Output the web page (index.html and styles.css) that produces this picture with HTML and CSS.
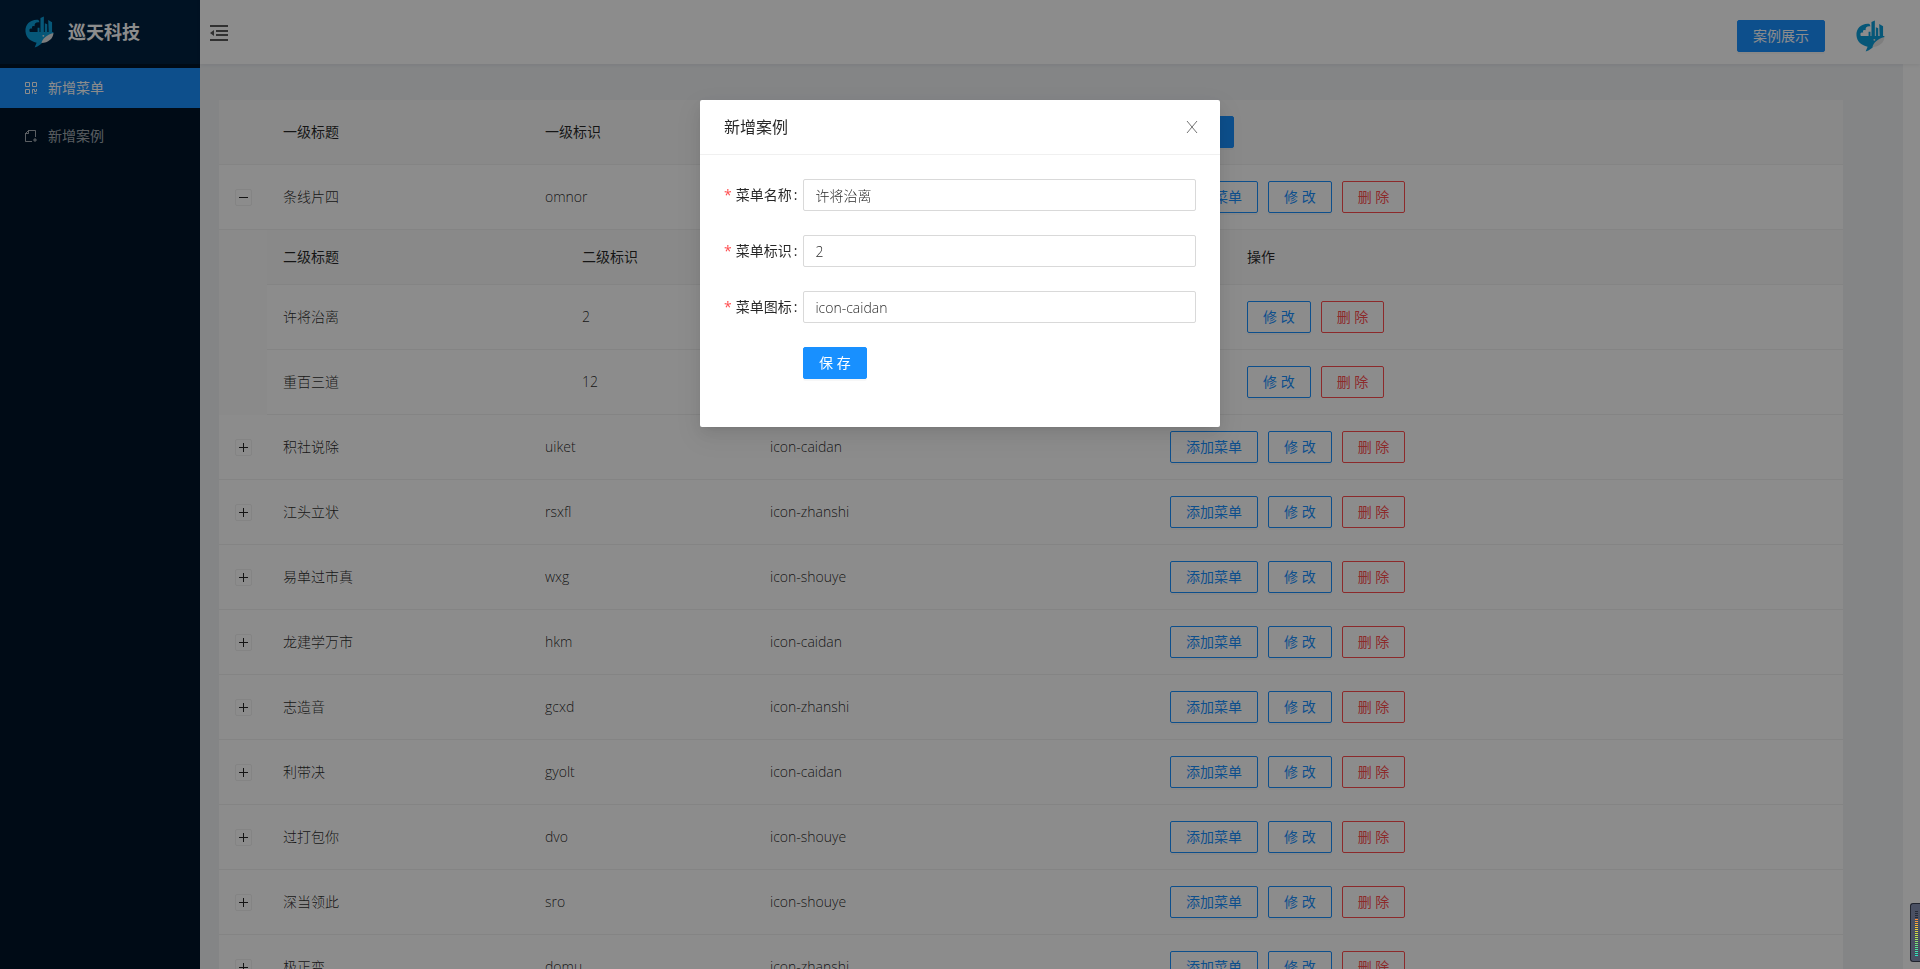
FILE: index.html
```html
<!DOCTYPE html>
<html lang="zh-CN">
<head>
<meta charset="utf-8">
<title>新增菜单</title>
<link rel="stylesheet" href="styles.css">
</head>
<body>
<svg class="defs" aria-hidden="true">
  <symbol id="logo" viewBox="0 0 30 32">
    <path class="whale" d="M14 3.500C6 2.500 0 8 .5 15.500C1 21.500 5 25.500 12 27L10 32C14 30.500 17 28.500 18 26.500C23 26 28 22 29.500 16H5C4 13 5 12.500 7.500 12.500C6.500 10 8 9.500 10 10C9.500 7 11.500 5.500 15 6Z"/>
    <path class="whale" d="M13 11.500H15V16.500H13ZM16 1.500L19.500 0V16.500H16ZM20.500 7L23 8V16.500H20.500ZM24 3.500L28 6V16.500H24.500Z"/>
    <path class="belly" d="M29.500 17C29 23 24 27 17 27.500C18 23 22 19 29.500 17Z"/>
    <circle class="belly" cx="19" cy="20" r="1"/>
  </symbol>
</svg>
<div class="app">
  <aside class="sider">
    <div class="brand"><svg class="logo"><use href="#logo"/></svg><h1>巡天科技</h1></div>
    <nav class="menu">
      <a class="menu-item active" href="#"><svg viewBox="0 0 12 12"><path d="M.5.500h4v4h-4zM7.500.500h4v4h-4zM.5 7.500h4v4h-4zM11.500 7v2M7.500 11.500v-4h2v2h2M9.500 11.500h2"/></svg>新增菜单</a>
      <a class="menu-item" href="#"><svg viewBox="0 0 12 12"><path d="M7 11.500H.5V3.500L3.500.500H10.500V7M3.500.500V3.500H.5M10 8v4M8 10h4"/></svg>新增案例</a>
    </nav>
  </aside>
  <div class="main">
    <header class="header">
      <button class="fold" aria-label="收起菜单"><svg viewBox="0 0 18 16"><path d="M0 0h18v2H0zM6 5h12v2H6zM6 9h12v2H6zM0 14h18v2H0zM0 8L4 5v6z"/></svg></button>
      <div class="header-right"><button class="btn primary">案例展示</button><svg class="logo"><use href="#logo"/></svg></div>
    </header>
    <main class="content">
      <table class="table">
        <colgroup><col class="c-toggle"><col class="c-title"><col class="c-key"><col class="c-icon"><col></colgroup>
        <thead><tr><th></th><th>一级标题</th><th>一级标识</th><th></th><th><button class="btn primary">添 加</button></th></tr></thead>
        <tbody id="rows"></tbody>
      </table>
    </main>
  </div>
</div>
<div class="mask">
  <section class="modal" role="dialog" aria-modal="true" aria-labelledby="modal-title">
    <header class="modal-head"><h2 id="modal-title">新增案例</h2><button class="close" aria-label="关闭"><svg viewBox="0 0 12 12"><path d="M1 0L11 12M11 0L1 12"/></svg></button></header>
    <form class="form">
      <div class="field"><label for="name">菜单名称</label><input id="name" type="text" value="许将治离"></div>
      <div class="field"><label for="key">菜单标识</label><input id="key" type="text" value="2"></div>
      <div class="field"><label for="icon">菜单图标</label><input id="icon" type="text" value="icon-caidan"></div>
      <div class="field submit"><button class="btn primary" type="button">保 存</button></div>
    </form>
  </section>
</div>
<div class="meter" aria-hidden="true"><div class="meter-off"></div><div class="meter-on"></div></div>
<script src="app.js"></script>
</body>
</html>
```
FILE: app.js
```js
const menus = [
  ["条线片四", "omnor", "", [["许将治离", "2", ""], ["重百三道", "12", ""]]],
  ["积社说除", "uiket", "icon-caidan"],
  ["江头立状", "rsxfl", "icon-zhanshi"],
  ["易单过市真", "wxg", "icon-shouye"],
  ["龙建学万市", "hkm", "icon-caidan"],
  ["志造音", "gcxd", "icon-zhanshi"],
  ["利带决", "gyolt", "icon-caidan"],
  ["过打包你", "dvo", "icon-shouye"],
  ["深当领此", "sro", "icon-shouye"],
  ["极正变", "domu", "icon-zhanshi"]
];
const cells = (row) => row.slice(0, 3).map((text) => `<td>${text}</td>`).join("");
const edit = '<button class="btn ghost">修 改</button><button class="btn danger">删 除</button>';
const subTable = (rows) => `<tr class="expanded"><td></td><td colspan="4"><table class="table sub">
  <colgroup><col class="s-title"><col class="s-key"><col class="s-icon"><col></colgroup>
  <thead><tr><th>二级标题</th><th>二级标识</th><th></th><th>操作</th></tr></thead>
  <tbody>${rows.map((row) => `<tr>${cells(row)}<td><div class="actions">${edit}</div></td></tr>`).join("")}</tbody></table></td></tr>`;
document.getElementById("rows").innerHTML = menus.map((row) => {
  const open = Boolean(row[3]);
  return `<tr><td><button class="toggle${open ? " open" : ""}" aria-label="${open ? "收起" : "展开"}"></button></td>${cells(row)}
    <td><div class="actions"><button class="btn ghost">添加菜单</button>${edit}</div></td></tr>${open ? subTable(row[3]) : ""}`;
}).join("");
```
FILE: styles.css
```css
* { box-sizing: border-box; }
body {
  margin: 0;
  height: 100vh;
  overflow: hidden;
  background: #fff;
  color: rgba(0, 0, 0, .65);
  font: 14px/22px "Open Sans", "Noto Sans CJK SC", sans-serif;
}
button, input { font: inherit; color: inherit; }
button { cursor: pointer; }
h1, h2 { margin: 0; }
.defs { position: absolute; width: 0; height: 0; }
.app { display: flex; height: 100vh; overflow: hidden; }

.sider { flex: 0 0 200px; background: #001529; }
.brand { display: flex; align-items: center; gap: 14px; height: 64px; padding-left: 25px; background: #002140; }
.brand h1 { color: #fff; font-size: 18px; line-height: 32px; font-weight: 700; }
.logo { width: 29px; height: 32px; flex: none; }
.whale { fill: #0c9fdb; }
.belly { fill: #e6e6e6; }
.menu { display: flex; flex-direction: column; gap: 8px; padding-top: 4px; }
.menu-item { display: flex; align-items: center; gap: 11px; height: 40px; padding-left: 25px; color: rgba(255, 255, 255, .65); text-decoration: none; }
.menu-item.active { background: #1890ff; color: #fff; }
.menu-item svg { width: 12px; height: 12px; fill: none; stroke: currentColor; }

.main { flex: 1; min-width: 0; }
.header { position: relative; display: flex; align-items: center; justify-content: space-between; height: 64px; padding: 0 35px 0 10px; background: #fff; box-shadow: 0 1px 4px rgba(0, 21, 41, .08); }
.fold { display: flex; padding: 2px 0 0; border: 0; background: none; }
.fold svg { width: 18px; height: 16px; fill: rgba(0, 0, 0, .65); }
.header-right { display: flex; align-items: center; gap: 31px; padding-top: 8px; }
.content { margin-right: 17px; padding: 36px 60px 0 19px; background: #f0f2f5; }

.btn { height: 32px; padding: 0 15px; border: 1px solid #1890ff; border-radius: 2px; line-height: 20px; white-space: nowrap; box-shadow: 0 2px 0 rgba(0, 0, 0, .03); }
.primary { background: #1890ff; color: #fff; }
.ghost { background: transparent; color: #1890ff; }
.danger { background: transparent; color: #ff4d4f; border-color: #ff4d4f; box-shadow: none; }

.table { width: 100%; table-layout: fixed; border-collapse: separate; border-spacing: 0; background: #fff; }
.table th, .table td { height: 65px; padding: 0 16px; border-bottom: 1px solid #f0f0f0; text-align: left; font-weight: 400; }
.table th { background: #fafafa; color: rgba(0, 0, 0, .85); }
.table td, .field input { color: rgba(0, 0, 0, .85); font-weight: 300; }
.table th .btn { display: block; }
.c-toggle { width: 48px; }
.c-title { width: 262px; }
.c-key { width: 225px; }
.c-icon { width: 400px; }
.table .expanded > td { padding: 0; background: #fbfbfb; border: 0; }
.table.sub th { height: 55px; }
.s-title { width: 299px; }
.s-key { width: 285px; }
.s-icon { width: 380px; }
.actions { display: flex; gap: 10px; font-weight: 400; }
.toggle {
  display: block; width: 17px; height: 17px; padding: 0;
  border: 1px solid #f0f0f0; border-radius: 2px;
  background:
    linear-gradient(#262626, #262626) center / 9px 1px no-repeat,
    linear-gradient(#262626, #262626) center / 1px 9px no-repeat, #fff;
}
.toggle.open { background: linear-gradient(#262626, #262626) center / 9px 1px no-repeat, #fff; }

.mask { position: fixed; inset: 0; padding-top: 100px; background: rgba(0, 0, 0, .45); }
.modal { width: 520px; margin: 0 auto; border-radius: 2px; background: #fff; box-shadow: 0 3px 6px -4px rgba(0, 0, 0, .12), 0 6px 16px rgba(0, 0, 0, .08), 0 9px 28px 8px rgba(0, 0, 0, .05); }
.modal-head { display: flex; align-items: center; justify-content: space-between; padding: 16px 22px 16px 24px; border-bottom: 1px solid #f0f0f0; }
.modal-head h2 { color: rgba(0, 0, 0, .85); font-size: 16px; line-height: 22px; font-weight: 400; }
.close { display: flex; padding: 0; border: 0; background: none; }
.close svg { width: 12px; height: 12px; fill: none; stroke: #737373; stroke-width: 1; }
.form { display: flex; flex-direction: column; gap: 24px; padding: 24px 24px 48px; }
.field { display: flex; }
.field label { flex: 0 0 79px; display: flex; align-items: center; justify-content: flex-end; padding-right: 6px; color: rgba(0, 0, 0, .85); white-space: nowrap; }
.field label::before { content: "*"; margin-right: 4px; color: #ff4d4f; }
.field label::after { content: ":"; margin-left: 2px; }
.field input { flex: 1; min-width: 0; height: 32px; padding: 0 11px; border: 1px solid #d9d9d9; border-radius: 2px; background: #fff; }
.submit { padding-left: 79px; }

.meter { position: fixed; right: 0; bottom: 7px; width: 10px; height: 59px; padding: 7px 2px 6px 4px; border: 1px solid #20242f; border-right: 0; border-radius: 3px 0 0 3px; background: #4a5063; }
.meter-off { height: 8px; background: repeating-linear-gradient(#262b38 0 1px, transparent 1px 2px); }
.meter-on {
  height: 37px;
  background: repeating-linear-gradient(transparent 0 1px, #444a5c 1px 2px), linear-gradient(#ff8a3c, #f5cf35 25%, #b5e650 50%, #5ee68c 75%, #28e6c8);
}
```
